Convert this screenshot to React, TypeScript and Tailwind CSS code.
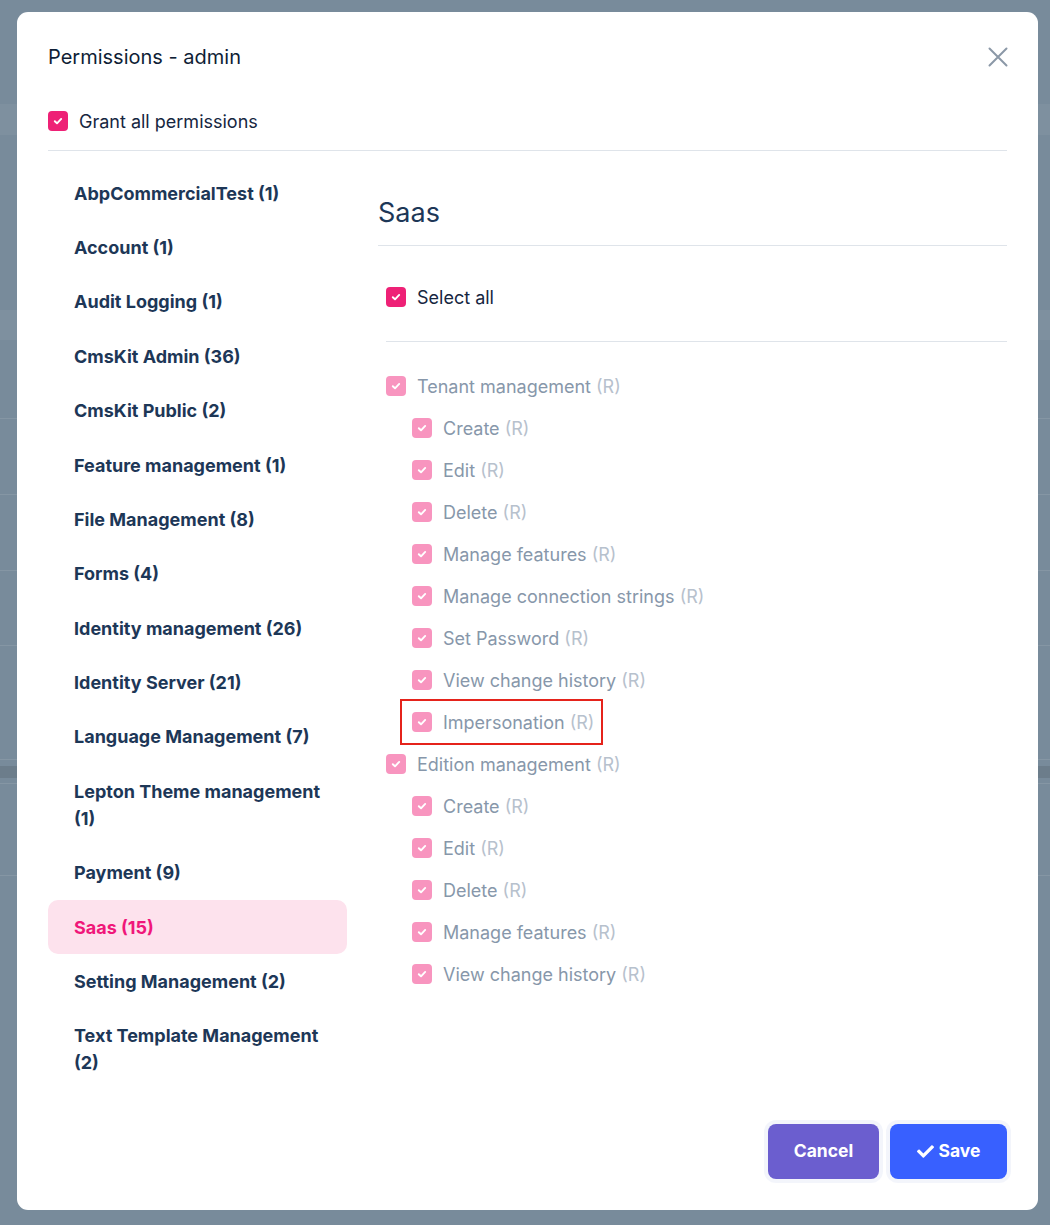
import { FaCheck } from "react-icons/fa";

const navItems = [
  "AbpCommercialTest (1)",
  "Account (1)",
  "Audit Logging (1)",
  "CmsKit Admin (36)",
  "CmsKit Public (2)",
  "Feature management (1)",
  "File Management (8)",
  "Forms (4)",
  "Identity management (26)",
  "Identity Server (21)",
  "Language Management (7)",
  "Lepton Theme management (1)",
  "Payment (9)",
  "Saas (15)",
  "Setting Management (2)",
  "Text Template Management (2)",
];

const groups = [
  {
    name: "Tenant management",
    children: [
      "Create",
      "Edit",
      "Delete",
      "Manage features",
      "Manage connection strings",
      "Set Password",
      "View change history",
      "Impersonation",
    ],
  },
  {
    name: "Edition management",
    children: ["Create", "Edit", "Delete", "Manage features", "View change history"],
  },
];

function Box({ muted = false }: { muted?: boolean }) {
  return (
    <span
      className={`w-5 h-5 rounded-[4px] flex items-center justify-center shrink-0 ${
        muted ? "bg-[#f895bf]" : "bg-[#ee2176]"
      }`}
    >
      <svg width="12" height="12" viewBox="0 0 12 12" fill="none">
        <path d="M2.8 6.2l2.2 2.1 4.2-4.4" stroke="white" strokeWidth="1.9" strokeLinecap="round" strokeLinejoin="round" />
      </svg>
    </span>
  );
}

function PermRow({ label, marked = false }: { label: string; marked?: boolean }) {
  return (
    <div className="relative flex items-center gap-[11px] h-6">
      {marked && (
        <span className="absolute -left-[12px] -top-[11px] w-[203px] h-[46px] border-2 border-[#e5231b]" />
      )}
      <Box muted />
      <span className="text-[18px] text-[#8797aa] whitespace-nowrap">
        {label} <span className="text-[#b7c1cd]">(R)</span>
      </span>
    </div>
  );
}

export default function App() {
  return (
    <div
      className="relative min-h-[1225px] bg-[#788b9b] overflow-hidden pt-[12px]"
      style={{ fontFamily: "Inter, 'Noto Sans', sans-serif" }}
    >
      {/* page behind the backdrop */}
      <div className="absolute inset-0 pointer-events-none">
        <div className="absolute left-0 right-0 top-[104px] h-[31px] bg-[#7e909f]" />
        <div className="absolute left-0 right-0 top-[310px] h-[30px] bg-[#7e909f]" />
        <div className="absolute left-0 right-0 top-[418px] border-t border-[#8596a4]" />
        <div className="absolute left-0 right-0 top-[494px] border-t border-[#8596a4]" />
        <div className="absolute left-0 right-0 top-[570px] border-t border-[#8596a4]" />
        <div className="absolute left-0 right-0 top-[645px] border-t border-[#8596a4]" />
        <div className="absolute left-0 right-0 top-[759px] border-t border-[#8596a4]" />
        <div className="absolute left-0 right-0 top-[766px] h-[12px] bg-[#6c7d8b]" />
        <div className="absolute left-0 right-0 top-[783px] border-t border-[#8596a4]" />
        <div className="absolute left-0 right-0 top-[875px] border-t border-[#8596a4]" />
      </div>

      <div className="relative ml-[17px] w-[1021px] h-[1198px] bg-white rounded-[11px] flex flex-col">
        {/* header */}
        <div className="pt-[32px] px-[31px]">
          <div className="h-[26px] flex items-center justify-between">
            <h1 className="text-[20px] leading-[26px] text-[#0f1e36]">Permissions - admin</h1>
            <svg width="20" height="20" viewBox="0 0 20 20" className="mr-[-1px]" fill="none">
              <path d="M1.5 1.5l17 17M18.5 1.5l-17 17" stroke="#8b98a7" strokeWidth="2" strokeLinecap="round" />
            </svg>
          </div>
        </div>

        <div className="px-[31px]">
          <label className="mt-[39px] flex items-center gap-[11px] h-6">
            <Box />
            <span className="text-[18px] text-[#16263f]">Grant all permissions</span>
          </label>
          <div className="mt-[17px] border-t border-[#dfe4ea]" />

          <div className="flex pt-[15px]">
            <nav className="w-[299px] shrink-0 flex flex-col">
              {navItems.map((item) => {
                const active = item === "Saas (15)";
                return (
                  <div
                    key={item}
                    className={`pl-[26px] pr-[12px] py-[13.7px] leading-[27px] text-[18px] font-bold rounded-[10px] ${
                      active ? "bg-[#fde2ed] text-[#f0177a]" : "text-[#1d3757]"
                    }`}
                  >
                    {item}
                  </div>
                );
              })}
            </nav>

            <div className="flex-1 ml-[31px]">
              <h2 className="mt-[31px] text-[27px] leading-[32px] text-[#1d3757] pb-[16px] border-b border-[#dfe4ea]">
                Saas
              </h2>
              <div className="pl-[8px]">
                <label className="mt-[39px] flex items-center gap-[11px] h-6">
                  <Box />
                  <span className="text-[18px] text-[#16263f]">Select all</span>
                </label>
                <div className="mt-[32px] border-t border-[#dfe4ea]" />
                <div className="mt-[32px] flex flex-col gap-[18px]">
                  {groups.map((g) => (
                    <div key={g.name} className="flex flex-col gap-[18px]">
                      <PermRow label={g.name} />
                      <div className="ml-[26px] flex flex-col gap-[18px]">
                        {g.children.map((c) => (
                          <PermRow key={c} label={c} marked={c === "Impersonation"} />
                        ))}
                      </div>
                    </div>
                  ))}
                </div>
              </div>
            </div>
          </div>
        </div>

        <div className="mt-auto px-[31px] pb-[31px] flex justify-end gap-[11px]">
          <button className="w-[111px] h-[55px] rounded-[8px] bg-[#6b5ecf] text-white text-[17.5px] font-bold shadow-[0_0_0_4px_rgba(240,242,250,0.8)]">
            Cancel
          </button>
          <button className="w-[117px] h-[55px] rounded-[8px] bg-[#3860ff] text-white text-[17.5px] font-bold flex items-center justify-center gap-[5px] shadow-[0_0_0_4px_rgba(240,242,250,0.8)]">
            <FaCheck className="w-[17px] h-[17px]" />
            Save
          </button>
        </div>
      </div>
    </div>
  );
}
